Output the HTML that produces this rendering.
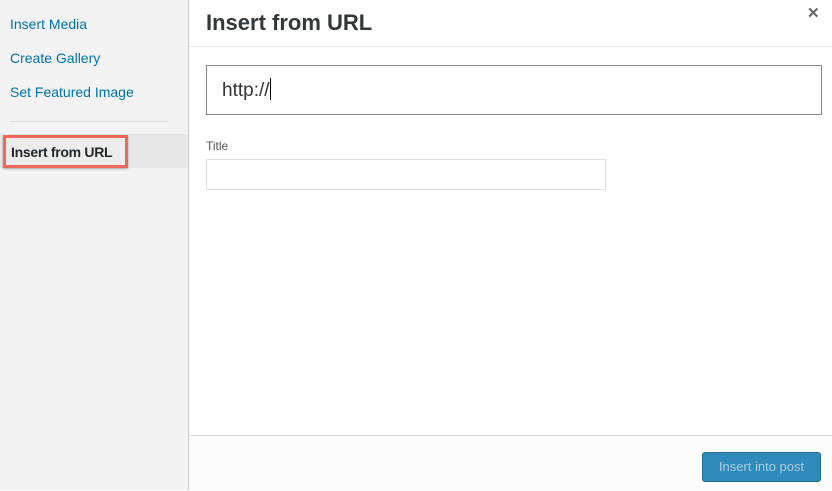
<!DOCTYPE html>
<html><head><style>
body{margin:0;width:832px;height:490px;overflow:hidden;font-family:"Liberation Sans",sans-serif;background:#fff;position:relative}
.side{position:absolute;left:0;top:0;width:188px;height:490px;background:#f3f3f3;border-right:1px solid #ccc}
.side a{position:absolute;left:10px;color:#0073aa;font-size:14px;text-decoration:none}
.sep{position:absolute;left:10px;top:121px;width:158px;height:1px;background:#ddd}
.sel{position:absolute;left:0;top:134px;width:188px;height:34px;background:#e6e6e6}
.hl{position:absolute;left:3px;top:135px;width:125px;height:33px;border:3px solid #f0675b;box-sizing:border-box;background:#ececec;box-shadow:0 1px 2px rgba(0,0,0,.3)}
.hl span{position:absolute;left:5px;top:6px;font-size:14px;font-weight:bold;color:#23282d;letter-spacing:-0.3px}
h1{position:absolute;left:206px;top:10px;margin:0;font-size:22px;font-weight:bold;color:#32373c}
.hb{position:absolute;left:189px;top:46px;width:643px;height:1px;background:#eee}
.x{position:absolute;left:807px;top:4px;font-size:15px;color:#666;font-weight:bold}
.url{position:absolute;left:206px;top:65px;width:616px;height:50px;border:1px solid #888;box-sizing:border-box;font-size:19px;color:#333;padding:12px 0 0 15px}
.url i{display:inline-block;width:1px;height:22px;background:#000;vertical-align:-4px}
.lbl{position:absolute;left:206px;top:139px;font-size:12px;color:#555}
.t{position:absolute;left:206px;top:159px;width:400px;height:31px;border:1px solid #ddd;box-sizing:border-box}
.foot{position:absolute;left:189px;top:435px;width:643px;height:55px;background:#fcfcfc;border-top:1px solid #ddd}
.btn{position:absolute;left:702px;top:452px;width:119px;height:30px;background:#2e8bba;border:1px solid #1f6d96;box-sizing:border-box;border-radius:3px;color:#a5cde2;font-size:13px;text-align:center;line-height:28px}
</style></head><body>
<div class="side">
<a style="top:16px">Insert Media</a>
<a style="top:50px">Create Gallery</a>
<a style="top:84px">Set Featured Image</a>
<div class="sep"></div>
<div class="sel"></div>
<div class="hl"><span>Insert from URL</span></div>
</div>
<h1>Insert from URL</h1>
<div class="x">✕</div>
<div class="hb"></div>
<div class="url">http://<i></i></div>
<div class="lbl">Title</div>
<div class="t"></div>
<div class="foot"></div>
<div class="btn">Insert into post</div>
</body></html>
